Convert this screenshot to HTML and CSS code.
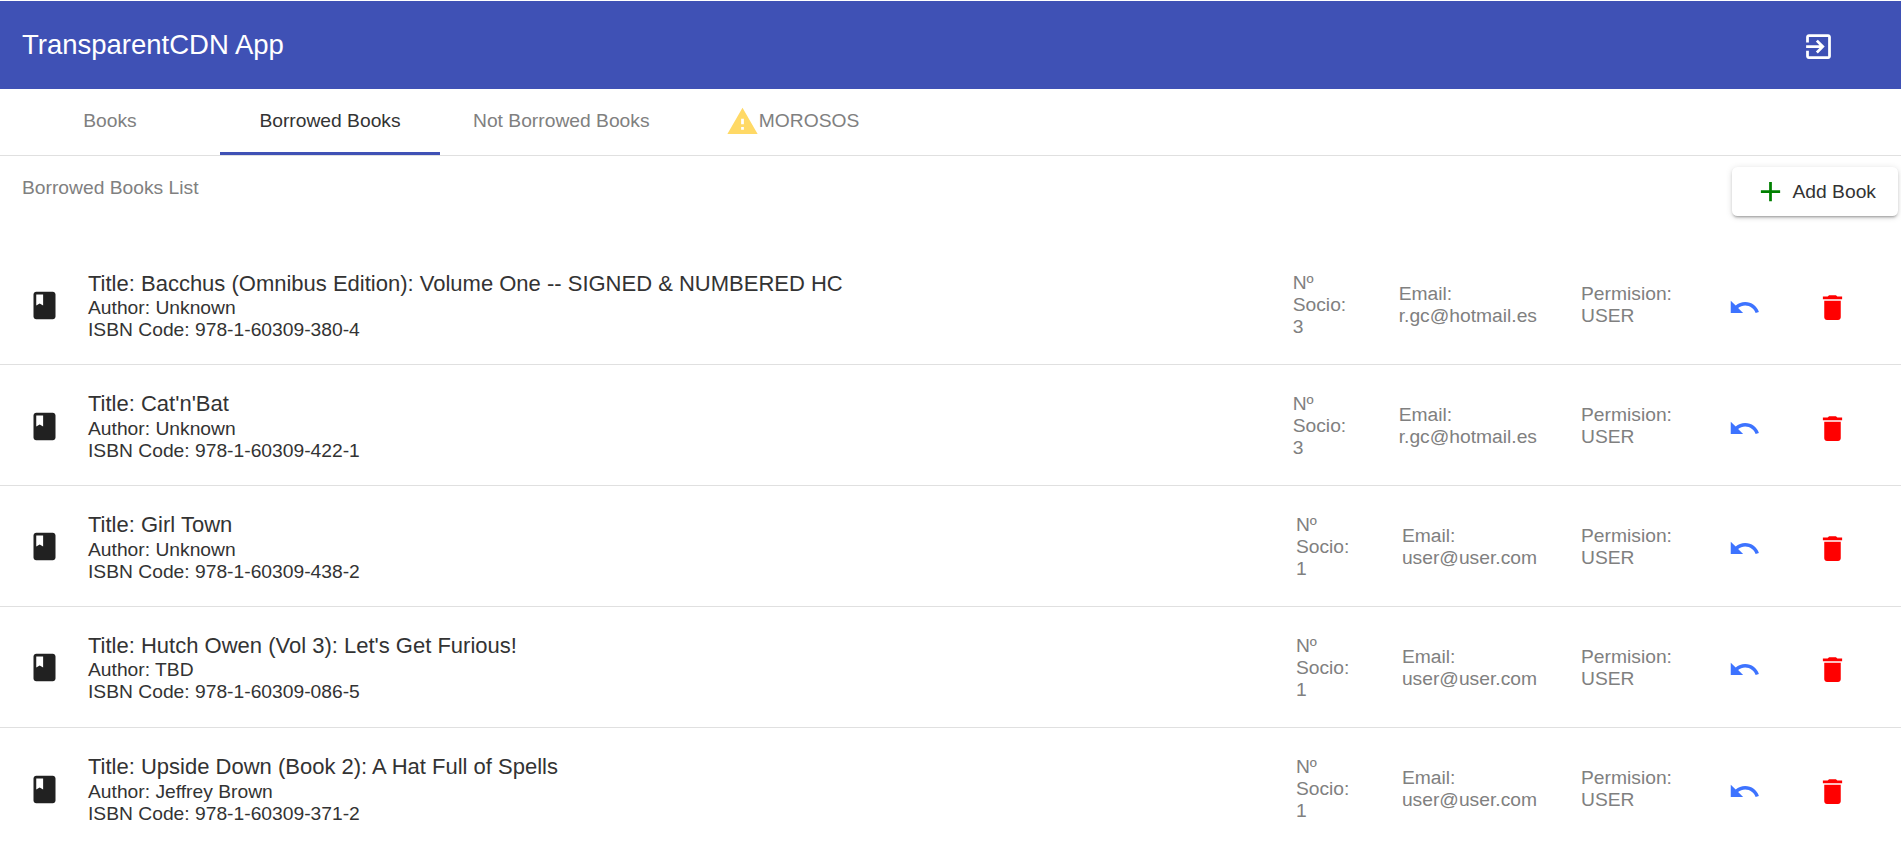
FILE: index.html
```html
<!DOCTYPE html>
<html>
    <head>
        <title>TransparentCDN App</title>
        <link rel="stylesheet" href="styles.css">
    </head>
    <body>
        <header class="app_bar">
            <div class="app_title">TransparentCDN App</div>
            <svg class="icon exit_icon" viewBox="0 0 24 24"><path d="M10.09 15.59L11.5 17l5-5-5-5-1.41 1.41L12.67 11H3v2h9.67l-2.58 2.59zM19 3H5c-1.11 0-2 .9-2 2v4h2V5h14v14H5v-4H3v4c0 1.1.89 2 2 2h14c1.1 0 2-.9 2-2V5c0-1.1-.9-2-2-2z"/></svg>
        </header>

        <nav class="tabs">
            <a class="tab">Books</a>
            <a class="tab tab_active">Borrowed Books</a>
            <a class="tab">Not Borrowed Books</a>
            <a class="tab">
                <svg class="icon warning_icon" viewBox="0 0 24 24"><path d="M1 21h22L12 2 1 21zm12-3h-2v-2h2v2zm0-4h-2v-4h2v4z"/></svg>MOROSOS
            </a>
        </nav>

        <div class="list_head">
            <div class="list_label">Borrowed Books List</div>
            <button class="add_button">
                <svg class="icon plus_icon" viewBox="0 0 24 24"><path d="M19 13h-6v6h-2v-6H5v-2h6V5h2v6h6v2z"/></svg>
                <span>Add Book</span>
            </button>
        </div>

        <ul class="book_list">
            <li class="book_row">
                <svg class="icon book_icon" viewBox="0 0 24 24"><path d="M18 2H6c-1.1 0-2 .9-2 2v16c0 1.1.9 2 2 2h12c1.1 0 2-.9 2-2V4c0-1.1-.9-2-2-2zM6 4h5v8l-2.5-1.5L6 12V4z"/></svg>
                <div class="book_main">
                    <div class="book_title">Title: Bacchus (Omnibus Edition): Volume One -- SIGNED &amp; NUMBERED HC</div>
                    <div>Author: Unknown</div>
                    <div>ISBN Code: 978-1-60309-380-4</div>
                </div>
                <div class="col_socio">Nº Socio: 3</div>
                <div class="col_email">Email:<br>r.gc@hotmail.es</div>
                <div class="col_perm">Permision:<br>USER</div>
                <svg class="icon undo_icon" viewBox="0 0 24 24"><path d="M12.5 8c-2.65 0-5.05.99-6.9 2.6L2 7v9h9l-3.62-3.62c1.39-1.16 3.16-1.88 5.12-1.88 3.54 0 6.55 2.31 7.6 5.5l2.37-.78C21.08 11.03 17.15 8 12.5 8z"/></svg>
                <svg class="icon delete_icon" viewBox="0 0 24 24"><path d="M6 19c0 1.1.9 2 2 2h8c1.1 0 2-.9 2-2V7H6v12zM19 4h-3.5l-1-1h-5l-1 1H5v2h14V4z"/></svg>
            </li>
            <li class="book_row">
                <svg class="icon book_icon" viewBox="0 0 24 24"><path d="M18 2H6c-1.1 0-2 .9-2 2v16c0 1.1.9 2 2 2h12c1.1 0 2-.9 2-2V4c0-1.1-.9-2-2-2zM6 4h5v8l-2.5-1.5L6 12V4z"/></svg>
                <div class="book_main">
                    <div class="book_title">Title: Cat'n'Bat</div>
                    <div>Author: Unknown</div>
                    <div>ISBN Code: 978-1-60309-422-1</div>
                </div>
                <div class="col_socio">Nº Socio: 3</div>
                <div class="col_email">Email:<br>r.gc@hotmail.es</div>
                <div class="col_perm">Permision:<br>USER</div>
                <svg class="icon undo_icon" viewBox="0 0 24 24"><path d="M12.5 8c-2.65 0-5.05.99-6.9 2.6L2 7v9h9l-3.62-3.62c1.39-1.16 3.16-1.88 5.12-1.88 3.54 0 6.55 2.31 7.6 5.5l2.37-.78C21.08 11.03 17.15 8 12.5 8z"/></svg>
                <svg class="icon delete_icon" viewBox="0 0 24 24"><path d="M6 19c0 1.1.9 2 2 2h8c1.1 0 2-.9 2-2V7H6v12zM19 4h-3.5l-1-1h-5l-1 1H5v2h14V4z"/></svg>
            </li>
            <li class="book_row">
                <svg class="icon book_icon" viewBox="0 0 24 24"><path d="M18 2H6c-1.1 0-2 .9-2 2v16c0 1.1.9 2 2 2h12c1.1 0 2-.9 2-2V4c0-1.1-.9-2-2-2zM6 4h5v8l-2.5-1.5L6 12V4z"/></svg>
                <div class="book_main">
                    <div class="book_title">Title: Girl Town</div>
                    <div>Author: Unknown</div>
                    <div>ISBN Code: 978-1-60309-438-2</div>
                </div>
                <div class="col_socio">Nº Socio: 1</div>
                <div class="col_email">Email:<br>user@user.com</div>
                <div class="col_perm">Permision:<br>USER</div>
                <svg class="icon undo_icon" viewBox="0 0 24 24"><path d="M12.5 8c-2.65 0-5.05.99-6.9 2.6L2 7v9h9l-3.62-3.62c1.39-1.16 3.16-1.88 5.12-1.88 3.54 0 6.55 2.31 7.6 5.5l2.37-.78C21.08 11.03 17.15 8 12.5 8z"/></svg>
                <svg class="icon delete_icon" viewBox="0 0 24 24"><path d="M6 19c0 1.1.9 2 2 2h8c1.1 0 2-.9 2-2V7H6v12zM19 4h-3.5l-1-1h-5l-1 1H5v2h14V4z"/></svg>
            </li>
            <li class="book_row">
                <svg class="icon book_icon" viewBox="0 0 24 24"><path d="M18 2H6c-1.1 0-2 .9-2 2v16c0 1.1.9 2 2 2h12c1.1 0 2-.9 2-2V4c0-1.1-.9-2-2-2zM6 4h5v8l-2.5-1.5L6 12V4z"/></svg>
                <div class="book_main">
                    <div class="book_title">Title: Hutch Owen (Vol 3): Let's Get Furious!</div>
                    <div>Author: TBD</div>
                    <div>ISBN Code: 978-1-60309-086-5</div>
                </div>
                <div class="col_socio">Nº Socio: 1</div>
                <div class="col_email">Email:<br>user@user.com</div>
                <div class="col_perm">Permision:<br>USER</div>
                <svg class="icon undo_icon" viewBox="0 0 24 24"><path d="M12.5 8c-2.65 0-5.05.99-6.9 2.6L2 7v9h9l-3.62-3.62c1.39-1.16 3.16-1.88 5.12-1.88 3.54 0 6.55 2.31 7.6 5.5l2.37-.78C21.08 11.03 17.15 8 12.5 8z"/></svg>
                <svg class="icon delete_icon" viewBox="0 0 24 24"><path d="M6 19c0 1.1.9 2 2 2h8c1.1 0 2-.9 2-2V7H6v12zM19 4h-3.5l-1-1h-5l-1 1H5v2h14V4z"/></svg>
            </li>
            <li class="book_row">
                <svg class="icon book_icon" viewBox="0 0 24 24"><path d="M18 2H6c-1.1 0-2 .9-2 2v16c0 1.1.9 2 2 2h12c1.1 0 2-.9 2-2V4c0-1.1-.9-2-2-2zM6 4h5v8l-2.5-1.5L6 12V4z"/></svg>
                <div class="book_main">
                    <div class="book_title">Title: Upside Down (Book 2): A Hat Full of Spells</div>
                    <div>Author: Jeffrey Brown</div>
                    <div>ISBN Code: 978-1-60309-371-2</div>
                </div>
                <div class="col_socio">Nº Socio: 1</div>
                <div class="col_email">Email:<br>user@user.com</div>
                <div class="col_perm">Permision:<br>USER</div>
                <svg class="icon undo_icon" viewBox="0 0 24 24"><path d="M12.5 8c-2.65 0-5.05.99-6.9 2.6L2 7v9h9l-3.62-3.62c1.39-1.16 3.16-1.88 5.12-1.88 3.54 0 6.55 2.31 7.6 5.5l2.37-.78C21.08 11.03 17.15 8 12.5 8z"/></svg>
                <svg class="icon delete_icon" viewBox="0 0 24 24"><path d="M6 19c0 1.1.9 2 2 2h8c1.1 0 2-.9 2-2V7H6v12zM19 4h-3.5l-1-1h-5l-1 1H5v2h14V4z"/></svg>
            </li>
        </ul>
    </body>
</html>
```

FILE: styles.css
```css
html, body {
    height: 100%;
    overflow: hidden;
}
body {
    margin: 0;
    padding-top: 1px;
    box-sizing: border-box;
    background: #fff;
    color: #333;
    font-family: "Liberation Sans", Arial, sans-serif;
    font-size: 19.25px;
}
.icon {
    display: block;
    flex: none;
    width: 33px;
    height: 33px;
    fill: currentColor;
}

.app_bar {
    display: flex;
    align-items: center;
    justify-content: space-between;
    height: 88px;
    padding: 0 66px 0 22px;
    background-color: #3f51b5;
    color: #fff;
}
.app_title {
    font-size: 27.5px;
    line-height: 33px;
    margin-top: -2px;
}
.exit_icon {
    margin-top: 2px;
}

.tabs {
    display: flex;
    height: 66px;
    border-bottom: 1px solid #e0e0e0;
}
.tab {
    display: flex;
    align-items: center;
    justify-content: center;
    box-sizing: border-box;
    min-width: 220px;
    height: 66px;
    padding: 0 33px 2px;
    color: #808080;
    white-space: nowrap;
}
.tab_active {
    color: #333;
    border-bottom: 3px solid #3f51b5;
    padding-bottom: 0;
}
.warning_icon {
    color: #ffd966;
}

.list_head {
    display: flex;
    justify-content: space-between;
    align-items: flex-start;
    box-sizing: border-box;
    height: 88.5px;
    padding: 11px 3px 0 22px;
}
.list_label {
    color: #808080;
    margin-top: 10px;
}
.add_button {
    display: flex;
    align-items: center;
    gap: 6px;
    height: 49px;
    padding: 0 22px;
    border: 0;
    border-radius: 5.5px;
    background: #fff;
    color: #333;
    font-family: inherit;
    font-size: 19.25px;
    box-shadow: 0 3px 2px -2px rgba(0, 0, 0, 0.2), 0 2px 3px 0 rgba(0, 0, 0, 0.14), 0 1px 7px 0 rgba(0, 0, 0, 0.12);
}
.plus_icon {
    color: #008000;
}

.book_list {
    list-style: none;
    margin: 0;
    padding: 0;
}
.book_row {
    display: flex;
    align-items: center;
    box-sizing: border-box;
    height: 120.8px;
    padding-left: 27.5px;
    border-bottom: 1px solid #e0e0e0;
    line-height: 22px;
}
.book_row:last-child {
    border-bottom: 0;
}
.book_icon {
    margin: 2px 27.5px 0 0;
    color: #212121;
}
.book_main {
    flex: 1;
    min-width: 0;
    padding-top: 3.8px;
}
.book_title {
    font-size: 22px;
    line-height: 24px;
    margin-bottom: 1.4px;
}
.col_socio, .col_email, .col_perm {
    color: #808080;
    margin-top: 2px;
}
.col_socio {
    width: 60px;
    margin-right: 46px;
}
.col_email {
    margin-right: 44px;
    white-space: nowrap;
}
.col_perm {
    width: 147px;
}
.undo_icon {
    margin-top: 6px;
    color: #3d73ff;
}
.delete_icon {
    margin: 6px 52px 0 55px;
    color: #f00;
}
```
